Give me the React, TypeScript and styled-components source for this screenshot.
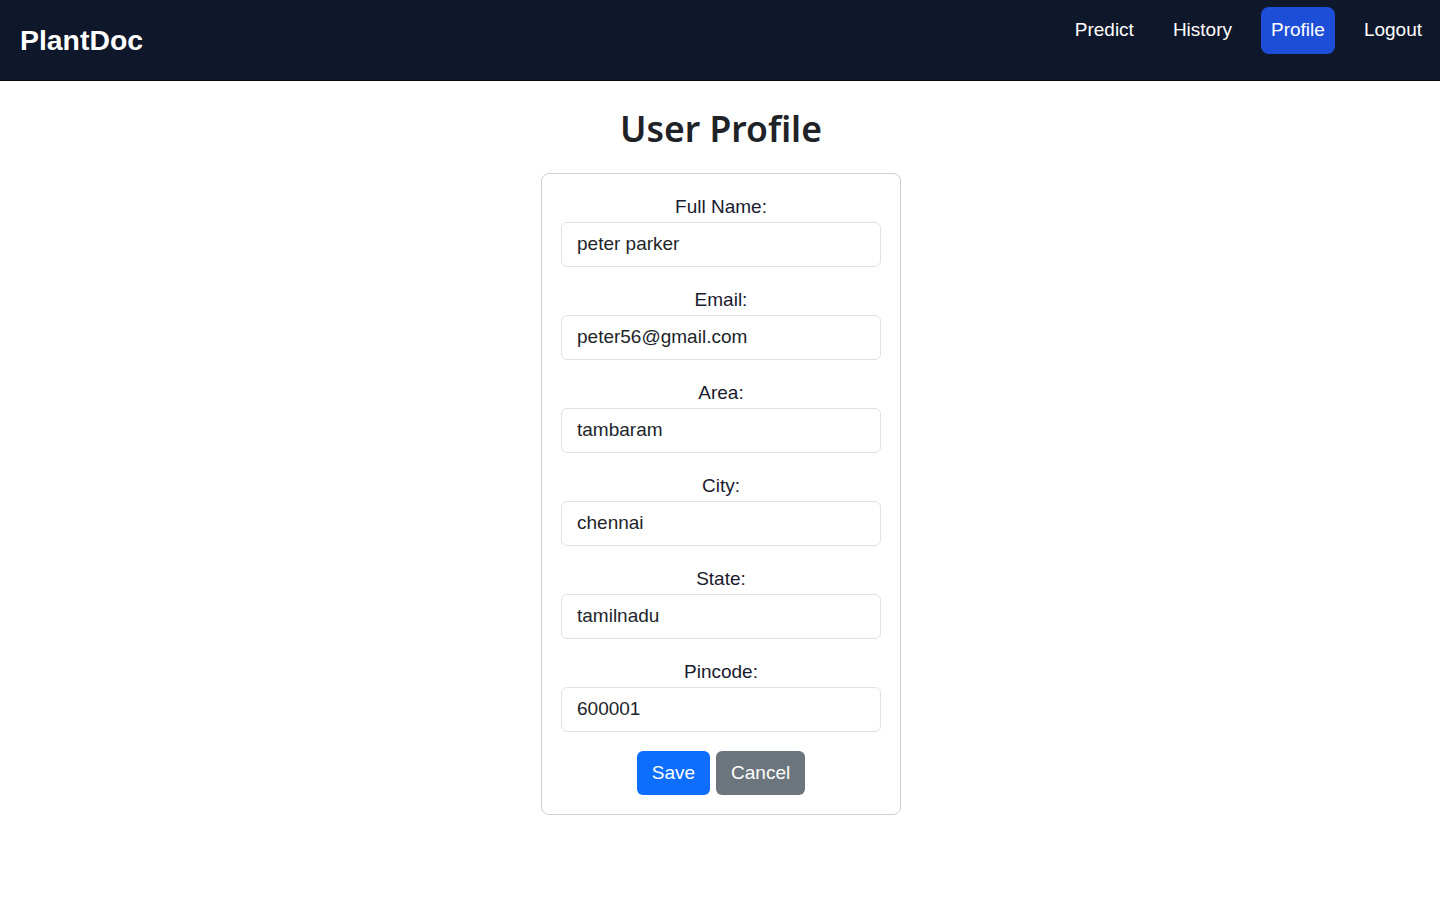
import React from "react";
import styled, { createGlobalStyle } from "styled-components";

const Global = createGlobalStyle`
  * { box-sizing: border-box; }
  body { margin: 0; background: #fff; font-family: "Liberation Sans", Arial, sans-serif; color: #212529; }
`;

const Nav = styled.nav`
  height: 81px;
  background: #0f172a;
  border-bottom: 1px solid #05080f;
  display: flex;
  justify-content: space-between;
  align-items: flex-start;
  padding: 0 8px 0 20px;
`;

const Logo = styled.div`
  color: #fff;
  font-weight: 700;
  font-size: 28.4px;
  line-height: 80px;
`;

const Links = styled.div`
  display: flex;
  gap: 19px;
  padding-top: 7px;
`;

const NavLink = styled.a<{ $active?: boolean }>`
  color: #fff;
  font-size: 19px;
  line-height: 46px;
  height: 47px;
  padding: 0 10px;
  border-radius: 8px;
  text-decoration: none;
  background: ${(p) => (p.$active ? "#1d4ed8" : "transparent")};
`;

const Main = styled.main`
  display: flex;
  flex-direction: column;
  align-items: center;
  padding-left: 2px;
`;

const Title = styled.h1`
  font-family: "Noto Sans", "Open Sans", sans-serif;
  font-weight: 600;
  font-size: 35.5px;
  line-height: 48px;
  color: #1f2328;
  margin: 23px 0 21px;
`;

const Card = styled.form`
  width: 360px;
  border: 1px solid #d0d0d0;
  border-radius: 8px;
  padding: 19px 19px 19px;
  display: flex;
  flex-direction: column;
`;

const Field = styled.div`
  display: flex;
  flex-direction: column;
  align-items: center;
  margin-bottom: 19px;
`;

const Label = styled.label`
  font-size: 19px;
  line-height: 27px;
  color: #1a1a2e;
  margin-bottom: 2px;
`;

const Input = styled.input`
  width: 320px;
  height: 45px;
  border: 1px solid #dee2e6;
  border-radius: 6px;
  padding: 0 15px 2px;
  font-family: "Liberation Sans", Arial, sans-serif;
  font-size: 19px;
  color: #212529;
  outline: none;
`;

const Buttons = styled.div`
  display: flex;
  justify-content: center;
  gap: 6px;
`;

const Button = styled.button<{ $variant: "primary" | "secondary" }>`
  height: 44px;
  padding: 0 15px;
  border: none;
  border-radius: 6px;
  color: #fff;
  font-family: "Liberation Sans", Arial, sans-serif;
  font-size: 19px;
  background: ${(p) => (p.$variant === "primary" ? "#0d6efd" : "#6c757d")};
  cursor: pointer;
`;

const fields = [
  ["Full Name:", "peter parker"],
  ["Email:", "peter56@gmail.com"],
  ["Area:", "tambaram"],
  ["City:", "chennai"],
  ["State:", "tamilnadu"],
  ["Pincode:", "600001"],
];

export default function App() {
  return (
    <>
      <Global />
      <Nav>
        <Logo>PlantDoc</Logo>
        <Links>
          <NavLink href="#">Predict</NavLink>
          <NavLink href="#">History</NavLink>
          <NavLink href="#" $active>Profile</NavLink>
          <NavLink href="#">Logout</NavLink>
        </Links>
      </Nav>
      <Main>
        <Title>User Profile</Title>
        <Card onSubmit={(e) => e.preventDefault()}>
          {fields.map(([label, value]) => (
            <Field key={label}>
              <Label>{label}</Label>
              <Input defaultValue={value} />
            </Field>
          ))}
          <Buttons>
            <Button $variant="primary" type="submit">Save</Button>
            <Button $variant="secondary" type="button">Cancel</Button>
          </Buttons>
        </Card>
      </Main>
    </>
  );
}
